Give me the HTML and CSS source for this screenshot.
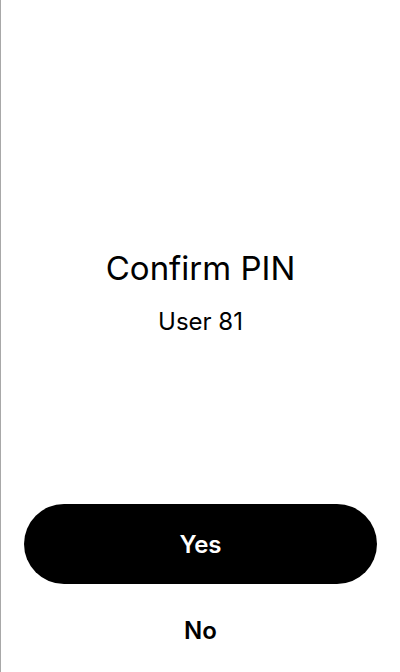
FILE: index.html
```html
<!DOCTYPE html>
<html lang="en">
<head>
<meta charset="utf-8">
<title>Confirm PIN</title>
<link rel="stylesheet" href="styles.css">
</head>
<body>
<main class="screen">
  <section class="content">
    <h1 class="title">Confirm PIN</h1>
    <p class="subtitle">User 81</p>
  </section>
  <footer class="actions">
    <button class="btn-primary" type="button">Yes</button>
    <button class="btn-text" type="button">No</button>
  </footer>
</main>
</body>
</html>
```

FILE: styles.css
```css
* { box-sizing: border-box; }
html, body {
  margin: 0;
  padding: 0;
  height: 100%;
  background: #ffffff;
}
body {
  font-family: Inter, "Noto Sans", sans-serif;
  color: #000;
}
.screen {
  height: 672px;
  display: flex;
  flex-direction: column;
  border-left: 1px solid #a8a8a8;
}
.content {
  flex: 1;
  display: flex;
  flex-direction: column;
  align-items: center;
  justify-content: center;
  gap: 19px;
  padding-top: 80px;
}
.title {
  margin: 0;
  font-size: 33px;
  line-height: 40px;
  font-weight: 400;
}
.subtitle {
  margin: 0;
  font-size: 24px;
  line-height: 30px;
  font-weight: 400;
}
.actions {
  display: flex;
  flex-direction: column;
  padding: 0 23px 18px 23px;
}
.btn-primary {
  height: 80px;
  border: none;
  border-radius: 40px;
  background: #000;
  color: #fff;
  font-family: inherit;
  font-size: 24px;
  font-weight: 600;
  cursor: pointer;
}
.btn-text {
  margin-top: 22px;
  height: 48px;
  border: none;
  background: transparent;
  color: #000;
  font-family: inherit;
  font-size: 24px;
  font-weight: 600;
  cursor: pointer;
}
```
